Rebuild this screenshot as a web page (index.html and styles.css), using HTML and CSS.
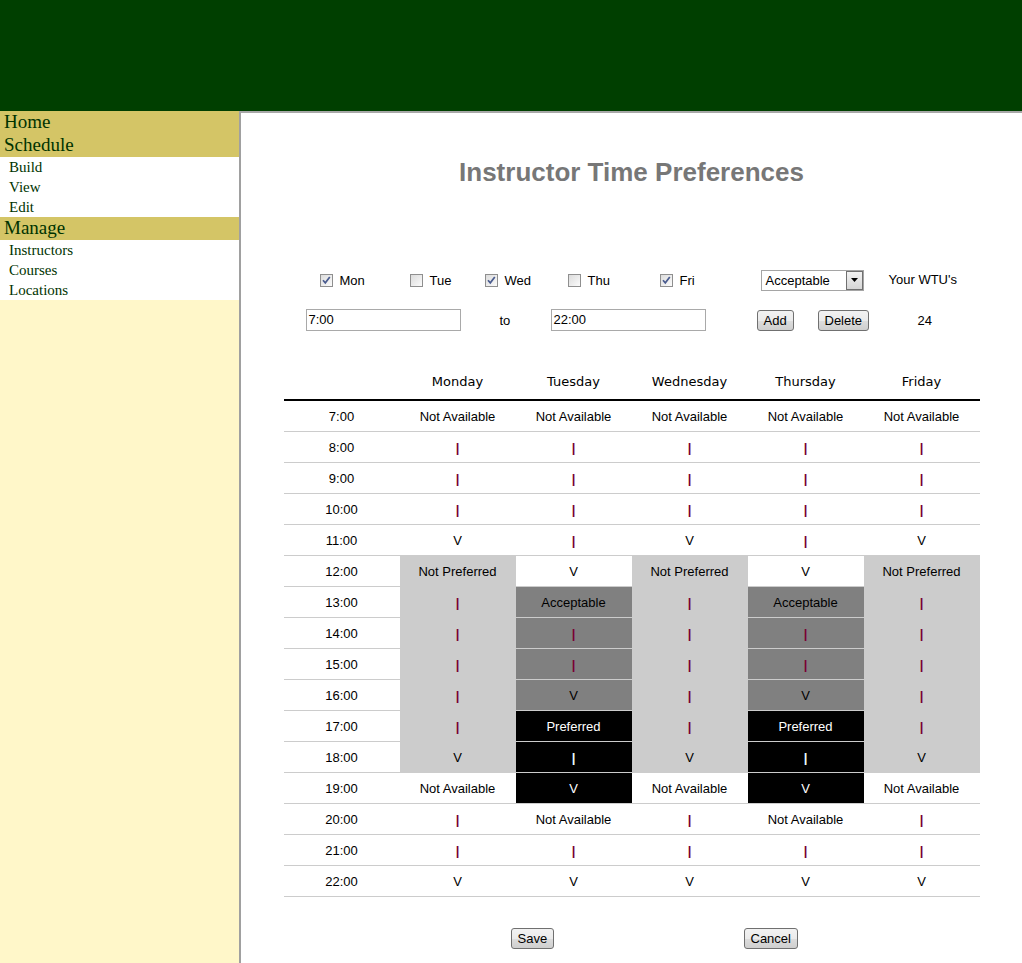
FILE: index.html
```html
<!DOCTYPE html>
<html>
<head>
<meta charset="utf-8">
<title>Instructor Time Preferences</title>
<link rel="stylesheet" href="styles.css">
</head>
<body>
<div class="page">
  <header class="topbar"></header>
  <div class="body-row">
    <nav class="sidebar">
      <div class="sec">Home</div>
      <div class="sec">Schedule</div>
      <div class="sub">
        <div class="item">Build</div>
        <div class="item">View</div>
        <div class="item">Edit</div>
      </div>
      <div class="sec">Manage</div>
      <div class="sub">
        <div class="item">Instructors</div>
        <div class="item">Courses</div>
        <div class="item">Locations</div>
      </div>
    </nav>
    <main class="main">
      <h1 class="title">Instructor Time Preferences</h1>
      <div class="controls">
        <div class="row row1">
          <label class="day"><span class="cb"><svg width="11" height="11" viewBox="0 0 11 11"><path d="M2 5.2 L4.3 7.8 L8.8 2" fill="none" stroke="#4a5c8f" stroke-width="1.7"/></svg></span>Mon</label>
          <label class="day"><span class="cb"></span>Tue</label>
          <label class="day"><span class="cb"><svg width="11" height="11" viewBox="0 0 11 11"><path d="M2 5.2 L4.3 7.8 L8.8 2" fill="none" stroke="#4a5c8f" stroke-width="1.7"/></svg></span>Wed</label>
          <label class="day"><span class="cb"></span>Thu</label>
          <label class="day"><span class="cb"><svg width="11" height="11" viewBox="0 0 11 11"><path d="M2 5.2 L4.3 7.8 L8.8 2" fill="none" stroke="#4a5c8f" stroke-width="1.7"/></svg></span>Fri</label>
          <div class="select"><span class="sel-text">Acceptable</span><span class="sel-btn"><svg width="7" height="4" viewBox="0 0 7 4"><path d="M0 0 H7 L3.5 4 Z" fill="#000"/></svg></span></div>
          <span class="txt">Your WTU's</span>
        </div>
        <div class="row row2">
          <span class="input">7:00</span>
          <span class="txt">to</span>
          <span class="input">22:00</span>
          <span class="btn">Add</span>
          <span class="btn">Delete</span>
          <span class="txt">24</span>
        </div>
      </div>
      <table class="grid">
        <thead>
          <tr><th></th><th>Monday</th><th>Tuesday</th><th>Wednesday</th><th>Thursday</th><th>Friday</th></tr>
        </thead>
        <tbody>
          <tr><td>7:00</td><td>Not Available</td><td>Not Available</td><td>Not Available</td><td>Not Available</td><td>Not Available</td></tr>
          <tr><td>8:00</td><td><span class="bar">|</span></td><td><span class="bar">|</span></td><td><span class="bar">|</span></td><td><span class="bar">|</span></td><td><span class="bar">|</span></td></tr>
          <tr><td>9:00</td><td><span class="bar">|</span></td><td><span class="bar">|</span></td><td><span class="bar">|</span></td><td><span class="bar">|</span></td><td><span class="bar">|</span></td></tr>
          <tr><td>10:00</td><td><span class="bar">|</span></td><td><span class="bar">|</span></td><td><span class="bar">|</span></td><td><span class="bar">|</span></td><td><span class="bar">|</span></td></tr>
          <tr><td>11:00</td><td>V</td><td><span class="bar">|</span></td><td>V</td><td><span class="bar">|</span></td><td>V</td></tr>
          <tr><td>12:00</td><td class="np">Not Preferred</td><td>V</td><td class="np">Not Preferred</td><td>V</td><td class="np">Not Preferred</td></tr>
          <tr><td>13:00</td><td class="np"><span class="bar">|</span></td><td class="ac">Acceptable</td><td class="np"><span class="bar">|</span></td><td class="ac">Acceptable</td><td class="np"><span class="bar">|</span></td></tr>
          <tr><td>14:00</td><td class="np"><span class="bar">|</span></td><td class="ac"><span class="bar">|</span></td><td class="np"><span class="bar">|</span></td><td class="ac"><span class="bar">|</span></td><td class="np"><span class="bar">|</span></td></tr>
          <tr><td>15:00</td><td class="np"><span class="bar">|</span></td><td class="ac"><span class="bar">|</span></td><td class="np"><span class="bar">|</span></td><td class="ac"><span class="bar">|</span></td><td class="np"><span class="bar">|</span></td></tr>
          <tr><td>16:00</td><td class="np"><span class="bar">|</span></td><td class="ac">V</td><td class="np"><span class="bar">|</span></td><td class="ac">V</td><td class="np"><span class="bar">|</span></td></tr>
          <tr><td>17:00</td><td class="np"><span class="bar">|</span></td><td class="pf">Preferred</td><td class="np"><span class="bar">|</span></td><td class="pf">Preferred</td><td class="np"><span class="bar">|</span></td></tr>
          <tr><td>18:00</td><td class="np">V</td><td class="pf"><span class="bar">|</span></td><td class="np">V</td><td class="pf"><span class="bar">|</span></td><td class="np">V</td></tr>
          <tr><td>19:00</td><td>Not Available</td><td class="pf">V</td><td>Not Available</td><td class="pf">V</td><td>Not Available</td></tr>
          <tr><td>20:00</td><td><span class="bar">|</span></td><td>Not Available</td><td><span class="bar">|</span></td><td>Not Available</td><td><span class="bar">|</span></td></tr>
          <tr><td>21:00</td><td><span class="bar">|</span></td><td><span class="bar">|</span></td><td><span class="bar">|</span></td><td><span class="bar">|</span></td><td><span class="bar">|</span></td></tr>
          <tr><td>22:00</td><td>V</td><td>V</td><td>V</td><td>V</td><td>V</td></tr>
        </tbody>
      </table>
      <div class="actions">
        <span class="btn">Save</span>
        <span class="btn">Cancel</span>
      </div>
    </main>
  </div>
</div>
</body>
</html>
```

FILE: styles.css
```css
html, body {
  margin: 0;
  padding: 0;
}
body {
  font-family: "Liberation Sans", Arial, sans-serif;
  font-size: 13px;
  color: #000;
  background: #fff;
}
.page {
  display: flex;
  flex-direction: column;
  min-height: 100vh;
}
.topbar {
  height: 111px;
  background: #003f00;
  flex: none;
}
.body-row {
  display: flex;
  flex: 1;
}
.sidebar {
  width: 239px;
  flex: none;
  background: #fff7c9;
  font-family: "Liberation Serif", "Times New Roman", serif;
  color: #003300;
}
.sec {
  background: #d4c566;
  font-size: 19px;
  height: 23px;
  line-height: 22px;
  padding-left: 4px;
}
.sub {
  background: #fff;
}
.item {
  box-sizing: border-box;
  font-size: 15px;
  height: 20px;
  line-height: 19px;
  padding-top: 1px;
  padding-left: 9px;
}
.main {
  flex: 1;
  border-left: 2px solid #a0a0a0;
  border-top: 2px solid #a8a8a8;
  display: flex;
  flex-direction: column;
  align-items: center;
}
.title {
  margin: 44px 0 0;
  font-size: 26px;
  line-height: 30px;
  font-weight: bold;
  color: #777;
  text-align: center;
}
.controls {
  width: 696px;
  margin-top: 82px;
}
.row {
  display: grid;
  align-items: center;
  height: 22px;
}
.row1 {
  padding-left: 36px;
  grid-template-columns: 90px 75px 83px 92px 101px 128px auto;
}
.row2 {
  margin-top: 18px;
  padding-left: 22px;
  grid-template-columns: 194px 51px 206px 61px 100px auto;
}
.row2 .txt {
  padding-top: 2px;
}
.day {
  display: flex;
  align-items: center;
}
.cb {
  box-sizing: border-box;
  width: 13px;
  height: 13px;
  border: 1px solid #8f8f8f;
  background: linear-gradient(135deg, #dcdcdc, #fbfbfb);
  margin-right: 7px;
  display: flex;
  align-items: center;
  justify-content: center;
}
.cb svg {
  display: block;
}
.txt {
  line-height: 16px;
}
.select {
  box-sizing: border-box;
  width: 103px;
  height: 21px;
  border: 1px solid #a5a5a5;
  display: flex;
  align-items: center;
  justify-content: space-between;
  padding-left: 4px;
  background: #fff;
}
.sel-btn {
  box-sizing: border-box;
  width: 17px;
  height: 19px;
  border: 1px solid #707070;
  background: linear-gradient(#f2f2f2, #d6d6d6);
  display: flex;
  align-items: center;
  justify-content: center;
}
.sel-btn svg {
  display: block;
}
.input {
  box-sizing: border-box;
  width: 155px;
  height: 22px;
  border: 1px solid #a9a9a9;
  padding: 2px 2px;
  line-height: 16px;
  background: #fff;
}
.btn {
  box-sizing: border-box;
  display: inline-flex;
  align-items: center;
  justify-content: center;
  height: 21px;
  padding: 0 6px;
  border: 1px solid #707070;
  border-radius: 3px;
  background: linear-gradient(#f2f2f2 0%, #ebebeb 50%, #dddddd 51%, #cfcfcf 100%);
  justify-self: start;
}
.grid {
  margin-top: 30px;
  width: 696px;
  border-collapse: collapse;
  table-layout: fixed;
}
.grid th {
  width: 116px;
  height: 36px;
  padding: 2px 0 0;
  font-family: "DejaVu Sans", Verdana, sans-serif;
  font-size: 13px;
  font-weight: normal;
  text-align: center;
  border-bottom: 2px solid #000;
}
.grid td {
  height: 30px;
  padding: 0;
  text-align: center;
  border-bottom: 1px solid #cccccc;
}
.bar {
  color: #7a0035;
  font-weight: bold;
}
.np {
  background: #cccccc;
}
.ac {
  background: #808080;
}
.pf {
  background: #000;
  color: #fff;
}
.pf .bar {
  color: #e8fbff;
}
.actions {
  width: 696px;
  margin-top: 31px;
  padding-left: 227px;
  box-sizing: border-box;
  display: grid;
  grid-template-columns: 233px auto;
}
```
